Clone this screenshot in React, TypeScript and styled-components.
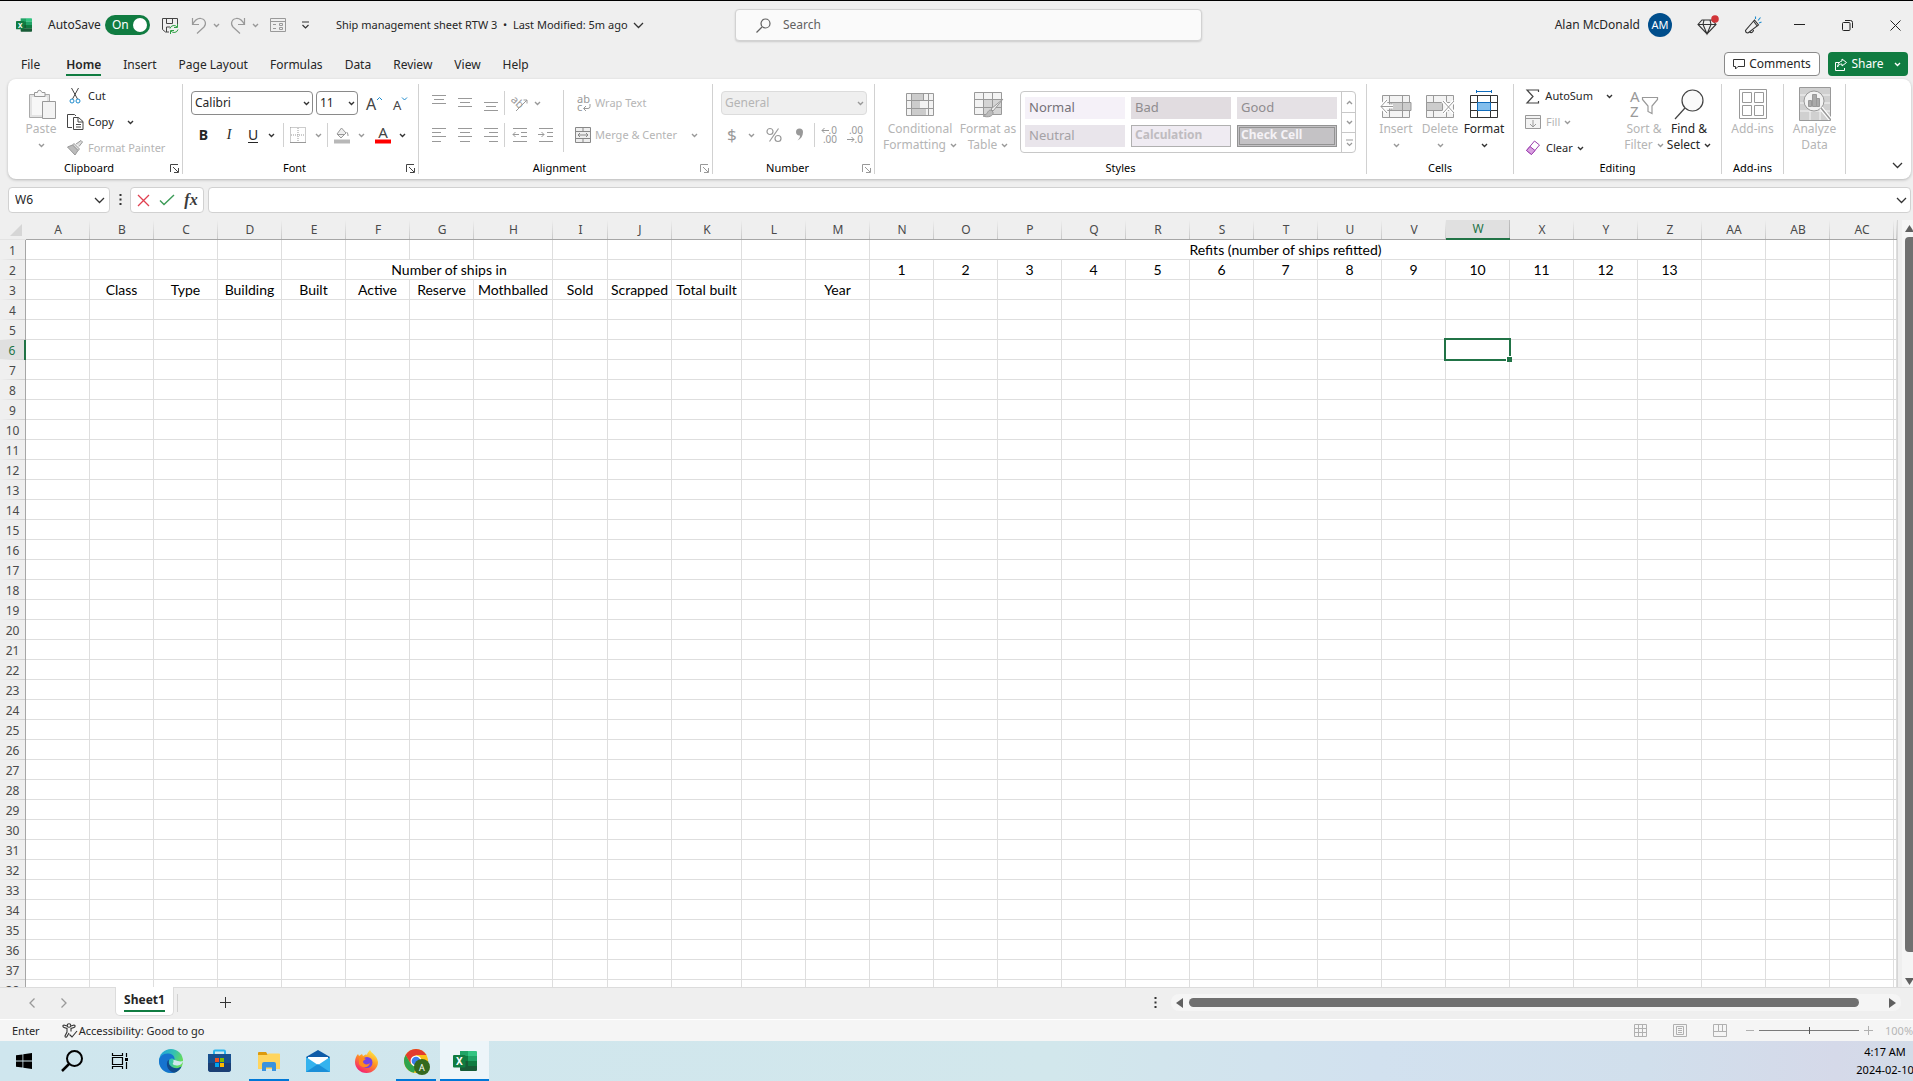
import React from "react";
import styled, { createGlobalStyle, css } from "styled-components";

const ui = `"Noto Sans", "Open Sans", sans-serif`;
const cellFont = `Lato, "Noto Sans", sans-serif`;
const GREEN = "#107c41";
const OFF = "#b5b5b5";
const INK = "#262626";

const Global = createGlobalStyle`
  *, *::before, *::after { box-sizing: border-box; }
  html, body { margin: 0; height: 100%; overflow: hidden; }
  body { background: #efefef; color: ${INK}; font: 12px/16px ${ui}; }
  button, input, select { font: inherit; color: inherit; margin: 0; padding: 0; border: 0; background: none; outline: none; }
  button { display: inline-flex; align-items: center; justify-content: center; white-space: nowrap; }
  button:disabled, select:disabled { color: ${OFF}; opacity: 1; }
  svg { display: block; flex: none; overflow: visible; }
`;

const Window = styled.div`
  display: flex;
  flex-direction: column;
  height: 100vh;
  border-top: 1px solid #000;
`;

/* ---------- title bar ---------- */
const TitleBar = styled.header`
  display: grid;
  grid-template-columns: 1fr 467px minmax(0, 686px);
  column-gap: 24px;
  height: 42px;
  padding: 6px 1px 0 16px;
`;
const Bar = styled.div<{ $end?: boolean }>`
  display: flex;
  align-items: center;
  min-width: 0;
  ${(p) => p.$end && "justify-content: flex-end;"}
`;
const AutoSave = styled.label`
  display: flex;
  align-items: center;
  gap: 4px;
  margin: 0 5px 0 16px;
`;
const Toggle = styled.span`
  display: flex;
  align-items: center;
  justify-content: space-between;
  width: 45px;
  height: 20px;
  padding: 0 3px 0 7px;
  border-radius: 10px;
  background: ${GREEN};
  color: #fff;
  &::after { content: ""; width: 14px; height: 14px; border-radius: 50%; background: #fff; }
`;
const HiddenCheck = styled.input`
  position: absolute;
  opacity: 0;
`;
const Tool = styled.button<{ $w?: number; $gap?: number }>`
  width: ${(p) => p.$w ?? 26}px;
  height: 24px;
  gap: ${(p) => p.$gap ?? 4}px;
  flex: none;
`;
const DocTitle = styled.button`
  gap: 5px;
  margin-left: 16px;
  font-size: 11px;
`;
const Search = styled.label`
  display: flex;
  align-items: center;
  gap: 12px;
  height: 32px;
  margin-top: 2px;
  padding-left: 20px;
  border: 1px solid #d2d2d2;
  border-radius: 4px;
  background: #fafafa;
  box-shadow: 0 1px 2px rgba(0, 0, 0, 0.15);
  color: #616161;
  input { flex: 1; min-width: 0; }
  input::placeholder { color: #616161; opacity: 1; }
`;
const Avatar = styled.span`
  display: grid;
  place-items: center;
  width: 24px;
  height: 24px;
  margin: 0 20px 0 8px;
  border-radius: 50%;
  background: #004e8c;
  color: #fff;
  font-size: 11px;
`;

/* ---------- ribbon tabs ---------- */
const TabRow = styled.nav`
  display: flex;
  align-items: center;
  height: 36px;
  padding: 6px 5px 0 10px;
`;
const RibbonTab = styled.button<{ $on?: boolean }>`
  height: 24px;
  margin: 0 11px;
  padding-top: 2px;
  &:first-child { margin-right: 15px; }
  ${(p) =>
    p.$on &&
    css`
      font-weight: 600;
      box-shadow: inset 0 -2px ${GREEN};
    `}
`;
const Spacer = styled.div`
  flex: 1;
`;
const Comments = styled.button`
  width: 96px;
  height: 24px;
  gap: 4px;
  margin-right: 8px;
  border: 1px solid #8a8a8a;
  border-radius: 4px;
  background: #fff;
`;
const Share = styled.button`
  width: 80px;
  height: 24px;
  gap: 4px;
  border-radius: 4px;
  background: ${GREEN};
  color: #fff;
  svg:last-child { margin-left: 6px; }
`;

/* ---------- ribbon ---------- */
const Ribbon = styled.section`
  display: flex;
  height: 100px;
  margin: 0 2px 0 8px;
  padding: 5px 0;
  border-radius: 8px;
  background: #fff;
  box-shadow: 0 1px 3px rgba(0, 0, 0, 0.24);
  flex: none;
`;
const Group = styled.div<{ $w: number }>`
  display: flex;
  flex-direction: column;
  width: ${(p) => p.$w}px;
  flex: none;
  border-right: 1px solid #d1d1d1;
`;
const GroupBody = styled.div<{ $pad?: number }>`
  display: flex;
  flex: 1;
  min-height: 0;
  padding-left: ${(p) => p.$pad ?? 8}px;
`;
const GroupFoot = styled.div<{ $launch?: boolean }>`
  display: grid;
  grid-template-columns: ${(p) => (p.$launch ? "1fr 12px" : "1fr")};
  align-items: center;
  justify-items: center;
  height: 12px;
  font-size: 11px;
  line-height: 12px;
  white-space: nowrap;
  color: #000;
  button { justify-self: start; }
`;
const Stack = styled.div<{ $gap?: number; $w?: number; $top?: number }>`
  display: flex;
  flex-direction: column;
  gap: ${(p) => p.$gap ?? 8}px;
  padding-top: ${(p) => p.$top ?? 7}px;
  ${(p) => p.$w && `width: ${p.$w}px;`}
  flex: none;
`;
const Row = styled.div`
  display: flex;
  align-items: center;
  height: 24px;
`;
const Big = styled.button<{ $w: number }>`
  flex-direction: column;
  justify-content: flex-start;
  width: ${(p) => p.$w}px;
  height: 72px;
  padding-top: 3px;
  flex: none;
`;
const BigIcon = styled.span`
  display: grid;
  place-items: center;
  height: 34px;
`;
const Line = styled.span`
  display: flex;
  align-items: center;
  gap: 4px;
  height: 16px;
`;
const Small = styled.button`
  justify-content: flex-start;
  gap: 4px;
  height: 24px;
  font-size: 11px;
`;
const IconSlot = styled.span<{ $w?: number }>`
  display: grid;
  place-items: center;
  width: ${(p) => p.$w ?? 16}px;
`;
const Rule = styled.span<{ $h?: number; $m?: number }>`
  width: 1px;
  height: ${(p) => p.$h ?? 24}px;
  margin: 0 ${(p) => p.$m ?? 4}px;
  background: #d1d1d1;
  flex: none;
`;
const Glyph = styled.span<{ $kind?: "b" | "i" | "u" }>`
  font-size: 14px;
  line-height: 16px;
  ${(p) => p.$kind === "b" && "font-weight: 700;"}
  ${(p) => p.$kind === "i" && `font-style: italic; font-family: "Liberation Serif", serif;`}
  ${(p) => p.$kind === "u" && "border-bottom: 1px solid currentColor; line-height: 14px;"}
`;
const Combo = styled.span<{ $w: number; $off?: boolean }>`
  position: relative;
  width: ${(p) => p.$w}px;
  height: 24px;
  margin-right: 3px;
  border: 1px solid ${(p) => (p.$off ? "#dcdcdc" : "#8a8a8a")};
  border-radius: 4px;
  background: ${(p) => (p.$off ? "#efefef" : "#fff")};
  flex: none;
  select { appearance: none; width: 100%; height: 100%; padding-left: 3px; }
  svg { position: absolute; right: 2px; top: 9px; pointer-events: none; }
`;
const Gallery = styled.div`
  display: grid;
  grid-template-columns: 1fr 15px;
  width: 336px;
  height: 62px;
  margin: 7px 0 0 2px;
  border: 1px solid #c8c8c8;
  border-radius: 4px;
  flex: none;
`;
const Swatches = styled.div`
  display: grid;
  grid-template-columns: repeat(3, 100px);
  grid-auto-rows: 22px;
  gap: 6px;
  padding: 5px 4px;
`;
const Swatch = styled.button<{ $bg: string; $fg: string; $kind?: "calc" | "check" }>`
  justify-content: flex-start;
  padding: 0 0 2px 4px;
  background: ${(p) => p.$bg};
  font-size: 13px;
  &&:disabled { color: ${(p) => p.$fg}; }
  ${(p) => p.$kind === "calc" && "border: 1px solid #b0b0b0; padding-left: 3px; font-weight: 700; font-size: 12px;"}
  ${(p) => p.$kind === "check" && "border: 3px double #939393; padding-left: 1px; font-weight: 700; font-size: 12px;"}
`;
const GalleryNav = styled.div`
  display: grid;
  grid-template-rows: repeat(3, 1fr);
  border-left: 1px solid #c8c8c8;
  button + button { border-top: 1px solid #c8c8c8; }
`;
const RibbonEnd = styled.div`
  display: flex;
  flex: 1;
  align-items: flex-end;
  justify-content: flex-end;
  padding: 0 8px 5px 0;
`;

/* ---------- formula bar ---------- */
const FormulaRow = styled.div`
  display: flex;
  align-items: center;
  gap: 4px;
  height: 26px;
  margin: 8px 2px 7px 8px;
  flex: none;
`;
const Box = styled.div<{ $w?: number }>`
  display: flex;
  align-items: center;
  height: 26px;
  border: 1px solid #d1d1d1;
  border-radius: 4px;
  background: #fff;
  ${(p) => (p.$w ? `width: ${p.$w}px; flex: none; padding: 0 4px 0 6px;` : "flex: 1; padding: 0 3px 0 6px;")}
  input { flex: 1; min-width: 0; }
`;
const Dots = styled.span`
  display: grid;
  place-items: center;
  width: 12px;
`;
const Fx = styled.span`
  font: italic 700 16px/20px "Liberation Serif", serif;
  color: #3b3b3b;
`;

/* ---------- sheet ---------- */
const SheetArea = styled.main`
  display: flex;
  flex: 1;
  min-height: 0;
  border-bottom: 1px solid #dcdcdc;
`;
const GridWrap = styled.div`
  flex: 1;
  min-width: 0;
  overflow: hidden;
  border-right: 1px solid #d6d6d6;
  background: #fff;
`;
const Table = styled.table`
  width: 100%;
  table-layout: fixed;
  border-collapse: separate;
  border-spacing: 0;
`;
const ColHead = styled.th<{ $on?: boolean }>`
  height: 20px;
  padding: 0;
  border-bottom: 1px solid #a6a6a6;
  background: linear-gradient(#efefef, #c8c8c8) right / 1px 100% no-repeat #efefef;
  color: #4a4a4a;
  font-weight: 400;
  line-height: 18px;
  ${(p) =>
    p.$on &&
    css`
      border-bottom: 2px solid #217346;
      background: linear-gradient(#c0c0c0, #b0b0b0) right / 1px 100% no-repeat #e0e0e0;
      color: #217346;
    `}
`;
const Corner = styled.th`
  height: 20px;
  padding: 0;
  border-bottom: 1px solid #e3e3e3;
  background: #efefef;
  svg { margin-left: 10px; }
`;
const RowHead = styled.th<{ $on?: boolean }>`
  height: 20px;
  padding: 2px 0 0;
  border-right: 1px solid #a6a6a6;
  background: linear-gradient(90deg, #efefef, #cfcfcf) bottom / 100% 1px no-repeat #efefef;
  color: #4a4a4a;
  font-weight: 400;
  line-height: 18px;
  ${(p) =>
    p.$on &&
    css`
      border-right: 2px solid #217346;
      background-color: #e0e0e0;
      color: #217346;
    `}
`;
const Cell = styled.td<{ $on?: boolean }>`
  height: 20px;
  padding: 0;
  border: solid #dedede;
  border-width: 0 1px 1px 0;
  color: #000;
  font: 14px/18px ${cellFont};
  text-align: center;
  white-space: nowrap;
  ${(p) =>
    p.$on &&
    css`
      position: relative;
      &::before { content: ""; position: absolute; inset: -2px; border: 2px solid #217346; z-index: 1; }
      &::after { content: ""; position: absolute; right: -3px; bottom: -3px; width: 6px; height: 6px; border: solid #fff; border-width: 1px 0 0 1px; background: #217346; z-index: 2; }
    `}
`;
const VScroll = styled.div`
  display: flex;
  flex-direction: column;
  align-items: flex-end;
  gap: 5px;
  width: 15px;
  padding: 5px 0 2px;
  overflow: hidden;
  background: linear-gradient(90deg, #efefef 4px, #f5f5f5 4px);
`;
const VThumb = styled.div`
  flex: 1;
  width: 8px;
  margin-bottom: 21px;
  border-radius: 4px 0 0 4px;
  background: #707070;
`;

/* ---------- bottom ---------- */
const TabsBar = styled.div`
  display: flex;
  align-items: center;
  height: 31px;
  padding-bottom: 2px;
  flex: none;
`;
const Nav = styled.div`
  display: flex;
  width: 115px;
  padding-left: 16px;
`;
const SheetTab = styled.button`
  align-self: flex-start;
  width: 59px;
  height: 29px;
  margin-top: -1px;
  border: 1px solid #dcdcdc;
  border-top: 0;
  border-radius: 0 0 5px 5px;
  background: #fff;
  font-weight: 700;
  z-index: 1;
  span { border-bottom: 2px solid ${GREEN}; line-height: 20px; }
`;
const HScroll = styled.div`
  display: flex;
  align-items: center;
  gap: 6px;
  flex: 0 0 730px;
  height: 17px;
  margin: 0 12px 0 10px;
  padding: 0 5px;
  border-radius: 8px;
  background: #f5f5f5;
`;
const HThumb = styled.div`
  flex: 1;
  height: 9px;
  margin-right: 24px;
  border-radius: 5px;
  background: #707070;
`;
const Status = styled.footer`
  display: flex;
  align-items: center;
  height: 22px;
  padding-left: 12px;
  border-top: 1px solid #fff;
  background: #f5f5f5;
  font-size: 11px;
  overflow: hidden;
  flex: none;
`;
const Access = styled.button`
  gap: 1px;
  margin-left: 22px;
`;
const Zoom = styled.input`
  appearance: none;
  width: 100px;
  height: 12px;
  background: linear-gradient(#7a7a7a, #7a7a7a) center / 100% 1px no-repeat;
  &::-webkit-slider-thumb { appearance: none; width: 1px; height: 7px; background: #555; }
`;
const Percent = styled.span`
  width: 36px;
  padding-left: 8px;
  color: ${OFF};
`;
const Taskbar = styled.div`
  display: flex;
  height: 40px;
  background: linear-gradient(90deg, #cfe6ee 0%, #d2e7ec 55%, #d2e1ef 72%, #d1dfec 86%, #d5d9e9 96%, #d3dce8 100%);
  flex: none;
`;
const SystemButtons = styled.div`
  display: flex;
  margin-right: 2px;
`;
const TaskButton = styled.button<{ $system?: boolean; $run?: boolean; $on?: boolean }>`
  width: ${(p) => (p.$system ? 48 : 49)}px;
  height: 40px;
  ${(p) => p.$run && "background: linear-gradient(#0078d7, #0078d7) bottom / 40px 2px no-repeat;"}
  ${(p) => p.$on && "background: linear-gradient(#0078d7, #0078d7) bottom / 100% 2px no-repeat #edf5f9;"}
`;
const Clock = styled.div`
  display: flex;
  flex-direction: column;
  width: 56px;
  align-items: center;
  padding-top: 2px;
  color: #000;
  font-size: 11px;
  line-height: 18px;
  white-space: nowrap;
`;

/* ---------- icons ---------- */
type SvgP = { w: number; h: number; c?: string; s?: number; children: React.ReactNode };
const I = ({ w, h, c = "#444", s = 1, children }: SvgP) => (
  <svg width={w} height={h} viewBox={`0 0 ${w} ${h}`} fill="none" stroke={c} strokeWidth={s} aria-hidden="true">
    {children}
  </svg>
);
const G = "#999";
const Chev = ({ c = "#333", up = false }: { c?: string; up?: boolean }) => (
  <I w={7} h={5} c={c} s={1.4}>
    <path d={up ? "M1 4l2.5-2.5L6 4" : "M1 1l2.5 2.5L6 1"} />
  </I>
);
const WideChev = () => (
  <I w={11} h={7} c="#333" s={1.3}>
    <path d="M1 1l4.500 4.500L10 1" />
  </I>
);
const Launch = ({ c = "#444" }: { c?: string }) => (
  <I w={9} h={9} c={c}>
    <path d="M.5 8V.5h7.5M3 3l5 5M8.500 4v4.500H4" />
  </I>
);
const Lines = ({ rows, y }: { rows: [number, number][]; y: number[] }) => (
  <I w={16} h={16} c={G}>
    {rows.map(([a, b], i) => (
      <path key={i} d={`M${a} ${y[i]}H${b}`} />
    ))}
  </I>
);
const ExcelLogo = ({ w, h }: { w: number; h: number }) => (
  <svg width={w} height={h} viewBox="0 0 24 22" aria-hidden="true">
    <path d="M7 1h8v10H7z" fill="#21a366" />
    <path d="M15 1h8a1 1 0 0 1 1 1v4h-9z" fill="#33c481" />
    <path d="M15 6h9v5h-9z" fill="#21a366" />
    <path d="M7 6h8v5H7z" fill="#107c41" />
    <path d="M7 11h8v5H7z" fill="#185c37" />
    <path d="M15 11h9v5h-9z" fill="#107c41" />
    <path d="M7 16h17v4a1 1 0 0 1-1 1H8a1 1 0 0 1-1-1z" fill="#185c37" />
    <rect x="0" y="5" width="12.500" height="12.500" rx="1" fill="#107c41" />
    <text x="6.300" y="15" fontFamily="Noto Sans" fontWeight="700" fontSize="10" fill="#fff" textAnchor="middle">X</text>
  </svg>
);
const DecimalIcon = ({ a, b, right }: { a: string; b: string; right?: boolean }) => (
  <I w={16} h={18} c={G}>
    <g fill={G} stroke="none" fontFamily="Noto Sans" fontSize="10">
      <text x="16" y="8" textAnchor="end">{a}</text>
      <text x="16" y="17" textAnchor="end">{b}</text>
    </g>
    {right ? <path d="M0 13.5h7M4.500 11L7 13.500 4.500 16" /> : <path d="M8 4.500H1M3.500 2L1 4.500 3.500 7" />}
  </I>
);
const SheetIcon = ({ children, c = G, fill = "#f3f3f3" }: { children?: React.ReactNode; c?: string; fill?: string }) => (
  <I w={32} h={30} c={c}>
    <path d="M2.500 6.500h27v22h-27z" fill={fill} />
    <path d="M2.500 13.500h27M2.500 21.500h27M9.500 6.500v22M22.500 6.500v22" />
    {children}
  </I>
);

/* ---------- data ---------- */
const letters = "A B C D E F G H I J K L M N O P Q R S T U V W X Y Z AA AB AC".split(" ");
const widths: Record<string, number> = { H: 79, I: 55, K: 70 };
const span: Record<string, number> = { N1: 13, F2: 3 };
const values: Record<string, string> = {
  N1: "Refits (number of ships refitted)",
  F2: "Number of ships in",
  B3: "Class", C3: "Type", D3: "Building", E3: "Built", F3: "Active", G3: "Reserve",
  H3: "Mothballed", I3: "Sold", J3: "Scrapped", K3: "Total built", M3: "Year",
};
for (let i = 1; i <= 13; i++) values[letters[12 + i] + "2"] = String(i);

function GridRow({ n }: { n: number }) {
  const cells: React.ReactNode[] = [];
  for (let c = 0; c < letters.length; ) {
    const id = letters[c] + n;
    const s = span[id] ?? 1;
    cells.push(
      <Cell key={id} colSpan={s} $on={id === "W6"}>
        {values[id]}
      </Cell>
    );
    c += s;
  }
  return (
    <tr>
      <RowHead scope="row" $on={n === 6}>{n}</RowHead>
      {cells}
      <Cell />
    </tr>
  );
}

const Foot = ({ label, launch }: { label: string; launch?: string }) => (
  <GroupFoot $launch={!!launch}>
    <span>{label}</span>
    {launch && (
      <button aria-label={`${label} settings`}>
        <Launch c={launch} />
      </button>
    )}
  </GroupFoot>
);

const tabs = ["File", "Home", "Insert", "Page Layout", "Formulas", "Data", "Review", "View", "Help"];

export default function App() {
  return (
    <Window>
      <Global />
      <TitleBar>
        <Bar>
          <ExcelLogo w={16} h={16} />
          <AutoSave>
            AutoSave
            <HiddenCheck type="checkbox" defaultChecked />
            <Toggle>On</Toggle>
          </AutoSave>
          <Tool $w={31} aria-label="Save">
            <I w={17} h={17}>
              <path d="M7 15H3.500L.500 12.500V1.500h15V7M4.500 1.500v5h6v-5M4.500 15v-5H8" />
              <path d="M8 11.500a4 4 0 0 1 7-1.500M15.500 7v3.500H12M16 12.500a4 4 0 0 1-7 1.500M8.500 17v-3.500H12" stroke="#2ea043" />
            </I>
          </Tool>
          <Tool $w={39} $gap={6} aria-label="Undo">
            <I w={16} h={17} c={G} s={1.2}>
              <path d="M1.500 1v6.500H8M1.500 7.500C4 3 7 1 10 1.500c4 .500 6 5 3 8.500l-7 6.500" />
            </I>
            <Chev c={G} />
          </Tool>
          <Tool $w={39} $gap={6} aria-label="Redo">
            <I w={16} h={17} c={G} s={1.2}>
              <path d="M14.500 1v6.500H8M14.500 7.500C12 3 9 1 6 1.500c-4 .500-6 5-3 8.500l7 6.500" />
            </I>
            <Chev c={G} />
          </Tool>
          <Tool $w={28} aria-label="Form">
            <I w={16} h={15} c={G}>
              <path d="M.500 .500h15v13H.500zM.500 3.500h15M3 6.500h3M3 10.500h3M9.500 5.500h3v2h-3zM9.500 9.500h3v2h-3z" />
            </I>
          </Tool>
          <Tool $w={28} aria-label="Customize toolbar">
            <I w={9} h={8} c="#333" s={1.2}>
              <path d="M1 1h7M1.500 4l3 3 3-3" />
            </I>
          </Tool>
          <DocTitle>
            Ship management sheet RTW 3&nbsp; • &nbsp;Last Modified: 5m ago
            <WideChev />
          </DocTitle>
        </Bar>
        <Search>
          <I w={15} h={15} c="#616161" s={1.2}>
            <circle cx="9.500" cy="5.500" r="4.500" />
            <path d="M6 9l-5.500 5.500" />
          </I>
          <input placeholder="Search" aria-label="Search" />
        </Search>
        <Bar $end>
          <span>Alan McDonald</span>
          <Avatar>AM</Avatar>
          <Tool $w={32} aria-label="Premium">
            <I w={22} h={20} c="#333" s={1.1}>
              <path d="M5 5h10l4 4.500L10 19 1 9.500zM1 9.500h18M7 5L6 9.500 10 19l4-9.500L13 5" />
              <circle cx="18" cy="4" r="3.800" fill="#d13438" stroke="none" />
            </I>
          </Tool>
          <Tool $w={58} aria-label="What's new">
            <I w={18} h={18} c="#333" s={1.1}>
              <path d="M10.500 4L1.500 14.500c0 1.500 1 2.500 2.500 2.500L14.500 9zM5.500 16c2 1.500 4.500 0 4-3.500M9.500 5l4 5.500" />
              <path d="M11.500 3V.500M14 4.500l2.500-3M15 7l2.500-1" stroke="#1e8bcd" />
            </I>
          </Tool>
          <Tool $w={34} aria-label="Minimize">
            <I w={11} h={2} c="#222"><path d="M0 .5h11" /></I>
          </Tool>
          <Tool $w={62} aria-label="Restore">
            <I w={11} h={11} c="#222">
              <rect x=".500" y="2.500" width="7.500" height="8" rx="1" />
              <path d="M3 .500h5.500a2 2 0 0 1 2 2V8" />
            </I>
          </Tool>
          <Tool $w={34} aria-label="Close">
            <I w={11} h={11} c="#222"><path d="M.500 .500l10 10M10.500 .500l-10 10" /></I>
          </Tool>
        </Bar>
      </TitleBar>

      <TabRow>
        {tabs.map((t) => (
          <RibbonTab key={t} $on={t === "Home"}>{t}</RibbonTab>
        ))}
        <Spacer />
        <Comments>
          <I w={12} h={12} c="#333"><path d="M.500 1.500h11v7H5l-2.500 2.500V8.500h-2z" /></I>
          Comments
        </Comments>
        <Share>
          <I w={12} h={13} c="#fff">
            <path d="M4 4.500H.500v8h9V10M7 1l4.500 3.500L7 8V6C4.500 6 3.500 7 2.500 9 3 5.500 4.500 3.500 7 3z" />
          </I>
          Share
          <Chev c="#fff" />
        </Share>
      </TabRow>

      <Ribbon>
        <Group $w={175}>
          <GroupBody>
            <Big $w={50} disabled>
              <BigIcon>
                <I w={24} h={31} c={G}>
                  <path d="M.5 5.500h20v23H.5z" fill="#e3e3e3" stroke="#aaa" />
                  <path d="M3 8h15v18H3z" fill="#f7f7f7" stroke="none" />
                  <path d="M5.500 7.500v-4h3a2 2 0 0 1 4-.500l.500.500h3v4z" fill="#f7f7f7" />
                  <path d="M13.500 12.500h13v17h-13z" fill="#f3f3f3" />
                </I>
              </BigIcon>
              <Line>Paste</Line>
              <Line><Chev c={G} /></Line>
            </Big>
            <Stack $gap={2} $top={0}>
              <Small>
                <IconSlot $w={18}>
                  <I w={12} h={16}>
                    <path d="M2.500 0l6 11M9.500 0l-6 11" />
                    <circle cx="3" cy="13" r="2" stroke="#1e8bcd" />
                    <circle cx="9" cy="13" r="2" stroke="#1e8bcd" />
                  </I>
                </IconSlot>
                Cut
              </Small>
              <Small>
                <IconSlot $w={18}>
                  <I w={17} h={16}>
                    <path d="M5 13.500H.500V.500h7L9 2M6.500 3.500h5l4.500 4v8H6.500zM11 3.500V8h5M9 10.500h5M9 13h5" />
                  </I>
                </IconSlot>
                Copy
                <IconSlot $w={26}><Chev /></IconSlot>
              </Small>
              <Small disabled>
                <IconSlot $w={18}>
                  <I w={16} h={16} c={G}>
                    <path d="M9 4l5-3.500 1.500 1.500L12 6.500M7 3.500L12.500 9 11 10.500 5.500 5z" fill="#ddd" />
                    <path d="M5.500 5L.500 7l7.500 8 3-4.500z" fill="#bbb" />
                  </I>
                </IconSlot>
                Format Painter
              </Small>
            </Stack>
          </GroupBody>
          <Foot label="Clipboard" launch="#444" />
        </Group>

        <Group $w={236}>
          <GroupBody>
            <Stack>
              <Row>
                <Combo $w={122}>
                  <select aria-label="Font"><option>Calibri</option></select>
                  <Chev />
                </Combo>
                <Combo $w={42}>
                  <select aria-label="Font size"><option>11</option></select>
                  <Chev />
                </Combo>
                <Tool aria-label="Increase font size">
                  <I w={16} h={17}>
                    <text x="0" y="15" fontFamily="Noto Sans" fontSize="16" fill="#444" stroke="none">A</text>
                    <path d="M11 5l2.500-2.500L16 5" stroke="#1e8bcd" />
                  </I>
                </Tool>
                <Tool aria-label="Decrease font size">
                  <I w={15} h={17}>
                    <text x="0" y="15" fontFamily="Noto Sans" fontSize="13" fill="#444" stroke="none">A</text>
                    <path d="M9 2.500L11.500 5 14 2.500" stroke="#1e8bcd" />
                  </I>
                </Tool>
              </Row>
              <Row>
                <Tool $w={25}><Glyph $kind="b">B</Glyph></Tool>
                <Tool $w={26}><Glyph $kind="i">I</Glyph></Tool>
                <Tool $w={39} $gap={10}><Glyph $kind="u">U</Glyph><Chev /></Tool>
                <Rule $m={2} />
                <Tool $w={39} $gap={9} aria-label="Borders">
                  <I w={16} h={16} c={G}>
                    <path d="M.500 .500h15v15M.500 .500v15M8 1v14M1 8h14" strokeDasharray="1 1" />
                    <path d="M0 15.500h16" />
                  </I>
                  <Chev c={G} />
                </Tool>
                <Rule $m={2} />
                <Tool $w={39} $gap={8} aria-label="Fill color">
                  <I w={16} h={17} c={G}>
                    <path d="M7.500 1L12 6l-5 5-4-4zM4 7.500h7M12.500 5c1.500 1 1.500 3 1.500 4" fill="#eee" />
                    <path d="M0 14.500h16" strokeWidth="4" stroke="#b8b8b8" />
                  </I>
                  <Chev c={G} />
                </Tool>
                <Tool $w={43} $gap={8} aria-label="Font color">
                  <I w={16} h={17}>
                    <text x="8" y="11" fontFamily="Noto Sans" fontSize="15" fill="#444" stroke="none" textAnchor="middle">A</text>
                    <path d="M0 14.500h16" strokeWidth="4" stroke="#f00" />
                  </I>
                  <Chev />
                </Tool>
              </Row>
            </Stack>
          </GroupBody>
          <Foot label="Font" launch="#444" />
        </Group>

        <Group $w={294}>
          <GroupBody $pad={7}>
            <Stack>
              <Row>
                <Tool aria-label="Top align"><Lines rows={[[1, 15], [3, 13], [1, 15]]} y={[0.5, 4.5, 8.5]} /></Tool>
                <Tool aria-label="Middle align"><Lines rows={[[1, 15], [3, 13], [1, 15]]} y={[3.5, 7.5, 11.5]} /></Tool>
                <Tool aria-label="Bottom align"><Lines rows={[[1, 15], [3, 13], [1, 15]]} y={[7.5, 11.5, 15.5]} /></Tool>
                <Rule $m={0} />
                <Tool $w={42} $gap={6} aria-label="Orientation">
                  <I w={17} h={17} c={G}>
                    <text x="-1" y="10" fontFamily="Noto Sans" fontSize="11" fill={G} stroke="none" transform="rotate(45 5 8)">ab</text>
                    <path d="M5 16L16 5M12.500 5H16v3.500" />
                  </I>
                  <Chev c={G} />
                </Tool>
              </Row>
              <Row>
                <Tool aria-label="Align left"><Lines rows={[[1, 15], [1, 10], [1, 15], [1, 10]]} y={[1.5, 5.5, 9.5, 14.5]} /></Tool>
                <Tool aria-label="Center"><Lines rows={[[1, 15], [3, 13], [1, 15], [3, 13]]} y={[1.5, 5.5, 9.5, 14.5]} /></Tool>
                <Tool aria-label="Align right"><Lines rows={[[1, 15], [6, 15], [1, 15], [6, 15]]} y={[1.5, 5.5, 9.5, 14.5]} /></Tool>
                <Rule $m={0} />
                <Tool $w={29} aria-label="Decrease indent">
                  <I w={16} h={16} c={G}><path d="M1 1.500h14M9 5.500h6M9 9.500h6M1 14.500h14M7 7.500H1M3.500 5L1 7.500 3.500 10" /></I>
                </Tool>
                <Tool $w={24} aria-label="Increase indent">
                  <I w={16} h={16} c={G}><path d="M1 1.500h14M9 5.500h6M9 9.500h6M1 14.500h14M0 7.500h6M3.500 5L6 7.500 3.500 10" /></I>
                </Tool>
              </Row>
            </Stack>
            <Stack $top={6} $w={17}><Rule $h={62} $m={5} /></Stack>
            <Stack>
              <Small disabled>
                <IconSlot>
                  <I w={15} h={17} c={G}>
                    <g fill={G} stroke="none" fontFamily="Noto Sans" fontSize="11">
                      <text x="1" y="8">ab</text>
                      <text x="1" y="16">c</text>
                    </g>
                    <path d="M14 9v2.500a2 2 0 0 1-2 2H8M10 11l-2.500 2.500L10 16" />
                  </I>
                </IconSlot>
                Wrap Text
              </Small>
              <Small disabled>
                <IconSlot>
                  <I w={16} h={16} c="#888">
                    <path d="M.500 .500h15v15H.500z" fill="#eee" />
                    <path d="M.500 4.500h15M.500 11.500h15M8 .500v4M8 11.500v4M3 8h10M5 6L3 8l2 2M11 6l2 2-2 2" />
                  </I>
                </IconSlot>
                Merge &amp; Center
                <IconSlot $w={26}><Chev c={G} /></IconSlot>
              </Small>
            </Stack>
          </GroupBody>
          <Foot label="Alignment" launch={G} />
        </Group>

        <Group $w={162}>
          <GroupBody>
            <Stack>
              <Row>
                <Combo $w={146} $off>
                  <select aria-label="Number format" disabled><option>General</option></select>
                  <Chev c={G} />
                </Combo>
              </Row>
              <Row>
                <Tool $w={40} $gap={11} disabled aria-label="Currency">
                  <I w={10} h={18} c={G}><text x="0" y="15" fontFamily="Noto Sans" fontSize="17" fill={G} stroke="none">$</text></I>
                  <Chev c={G} />
                </Tool>
                <Tool $w={25} disabled aria-label="Percent">
                  <I w={16} h={16} c={G} s={1.2}><circle cx="4" cy="4.500" r="3" /><circle cx="12" cy="11.500" r="3" /><path d="M12.500 1.500l-9 13" /></I>
                </Tool>
                <Tool $w={27} aria-label="Comma style">
                  <I w={9} h={14}><path d="M1 4a3.500 3.500 0 0 1 7 0c0 4-2 7-5.500 8.500 1.500-1.500 2.500-3 2.500-5C3 8 1 6.500 1 4z" fill={G} stroke="none" /></I>
                </Tool>
                <Rule $m={1} />
                <Tool $w={26} aria-label="Increase decimal"><DecimalIcon a=".0" b=".00" /></Tool>
                <Tool aria-label="Decrease decimal"><DecimalIcon a=".00" b=".0" right /></Tool>
              </Row>
            </Stack>
          </GroupBody>
          <Foot label="Number" launch={G} />
        </Group>

        <Group $w={492}>
          <GroupBody $pad={7}>
            <Big $w={76} disabled>
              <BigIcon>
                <I w={28} h={23} c={G}>
                  <path d="M.500 .500h27v22H.500z" fill="#f3f3f3" />
                  <path d="M5 1h13v6H5zM5 8h9v7H5zM5 16h15v6H5z" fill="#ccc" stroke="none" />
                  <path d="M.500 7.500h27M.500 15.500h27M5.500 .500v22M22.500 .500v22M17.500 .500v7" />
                </I>
              </BigIcon>
              <Line>Conditional</Line>
              <Line>Formatting <Chev c={G} /></Line>
            </Big>
            <Big $w={60} disabled>
              <BigIcon>
                <I w={32} h={28} c={G}>
                  <path d="M2.500 2.500h27v22h-27z" fill="#f3f3f3" />
                  <path d="M11 9h18v15H11z" fill="#d4d4d4" stroke="none" />
                  <path d="M2.500 9.500h27M2.500 17.500h27M11.500 2.500v22M20.500 2.500v22" />
                  <path d="M31 9L21 21l-2-2z" fill="#eee" />
                  <path d="M19 20c-4 0-3 5-8 6 5 2 11 0 10-4z" fill="#bbb" />
                </I>
              </BigIcon>
              <Line>Format as</Line>
              <Line>Table <Chev c={G} /></Line>
            </Big>
            <Gallery>
              <Swatches>
                <Swatch disabled $bg="#f5f1f8" $fg="#757278">Normal</Swatch>
                <Swatch disabled $bg="#e1dce0" $fg="#8f8c8f">Bad</Swatch>
                <Swatch disabled $bg="#e5e1e5" $fg="#8f8c8f">Good</Swatch>
                <Swatch disabled $bg="#e9e5eb" $fg="#a5a2a6">Neutral</Swatch>
                <Swatch disabled $bg="#efebf2" $fg="#bfbcc0" $kind="calc">Calculation</Swatch>
                <Swatch disabled $bg="#c4c2c5" $fg="#f5f2f6" $kind="check">Check Cell</Swatch>
              </Swatches>
              <GalleryNav>
                <button aria-label="Previous styles"><Chev c={G} up /></button>
                <button aria-label="Next styles"><Chev c={G} /></button>
                <button aria-label="More styles">
                  <I w={7} h={8} c={G} s={1.2}><path d="M0 1h7M1 4l2.500 2.500L6 4" /></I>
                </button>
              </GalleryNav>
            </Gallery>
          </GroupBody>
          <Foot label="Styles" />
        </Group>

        <Group $w={147}>
          <GroupBody $pad={7}>
            <Big $w={44} disabled>
              <BigIcon>
                <SheetIcon>
                  <path d="M11 13.500h20v8H11z" fill="#ccc" />
                  <path d="M22.500 13.500v8" />
                  <path d="M13 17.500H1M7 11l-6 6.500 6 6.500" stroke="#fff" strokeWidth="4" />
                  <path d="M13 17.500H1M7 11l-6 6.500 6 6.500" />
                </SheetIcon>
              </BigIcon>
              <Line>Insert</Line>
              <Line><Chev c={G} /></Line>
            </Big>
            <Big $w={44} disabled>
              <BigIcon>
                <SheetIcon>
                  <path d="M2.500 13.500h16v8h-16z" fill="#ccc" />
                  <path d="M19 12l11 12M30 12L19 24" stroke="#fff" strokeWidth="4" />
                  <path d="M19 12l11 12M30 12L19 24" />
                </SheetIcon>
              </BigIcon>
              <Line>Delete</Line>
              <Line><Chev c={G} /></Line>
            </Big>
            <Big $w={44}>
              <BigIcon>
                <SheetIcon c="#333" fill="#fff">
                  <path d="M9.500 13.500h13v8h-13z" fill="#83beec" stroke="#0f6cbd" />
                  <path d="M8.500 2.500h15M8.500 1v3M23.500 1v3" stroke="#0f6cbd" />
                </SheetIcon>
              </BigIcon>
              <Line>Format</Line>
              <Line><Chev /></Line>
            </Big>
          </GroupBody>
          <Foot label="Cells" />
        </Group>

        <Group $w={208}>
          <GroupBody $pad={10}>
            <Stack $gap={2} $top={0} $w={98}>
              <Small>
                <IconSlot $w={18}><I w={13} h={15} s={1.2}><path d="M12.500 3V1H1l6 6.500L1 14h11.500v-2" /></I></IconSlot>
                AutoSum
                <IconSlot $w={26}><Chev /></IconSlot>
              </Small>
              <Small disabled>
                <IconSlot $w={18}>
                  <I w={16} h={15} c={G}><path d="M.500 .500h15v13H.500z" fill="#f3f3f3" /><path d="M.500 3.500h15M8 5v7M5 9l3 3 3-3" /></I>
                </IconSlot>
                Fill <Chev c={G} />
              </Small>
              <Small>
                <IconSlot $w={18}>
                  <I w={16} h={16} c="#9b3fae"><path d="M9.500 1l5 4-8 9.500-5-4z" fill="#fff" /><path d="M5 6.500l5 4-3.500 4-5-4z" fill="#d9a0e0" /></I>
                </IconSlot>
                Clear <Chev />
              </Small>
            </Stack>
            <Big $w={44} disabled>
              <BigIcon>
                <I w={30} h={30} c={G} s={1.2}>
                  <g fill={G} stroke="none" fontFamily="Noto Sans" fontSize="15">
                    <text x="1" y="13">A</text>
                    <text x="1" y="28">Z</text>
                  </g>
                  <path d="M13.500 8.500h15v2L23 17v7.500l-4-2V17l-5.500-6.500z" />
                </I>
              </BigIcon>
              <Line>Sort &amp;</Line>
              <Line>Filter <Chev c={G} /></Line>
            </Big>
            <Big $w={46}>
              <BigIcon>
                <I w={30} h={31} s={1.2}><circle cx="18.500" cy="11.500" r="10.500" fill="#fafafa" /><path d="M11 19L1 30" /></I>
              </BigIcon>
              <Line>Find &amp;</Line>
              <Line>Select <Chev /></Line>
            </Big>
          </GroupBody>
          <Foot label="Editing" />
        </Group>

        <Group $w={62}>
          <GroupBody $pad={0}>
            <Big $w={61} disabled>
              <BigIcon>
                <I w={28} h={30} c={G}><path d="M.500 .500h27v29H.500zM3.500 3.500h9v10h-9zM15.500 3.500h9v10h-9zM3.500 16.500h9v10h-9zM15.500 16.500h9v10h-9z" /></I>
              </BigIcon>
              <Line>Add-ins</Line>
            </Big>
          </GroupBody>
          <Foot label="Add-ins" />
        </Group>

        <Group $w={62}>
          <GroupBody $pad={0}>
            <Big $w={61} disabled>
              <BigIcon>
                <I w={32} h={34} c={G}>
                  <path d="M.500 .500h31v33H.500z" fill="#d0d0d0" />
                  <path d="M1 8h30M1 16h30M1 24h30M11 24v9M21 24v9" stroke="#f5f5f5" />
                  <circle cx="15" cy="14" r="10" fill="#f3f3f3" />
                  <path d="M22 21l9 11" stroke="#fff" strokeWidth="4" />
                  <path d="M22 21l9 11" strokeWidth="1.500" />
                  <path d="M9.500 13.500h3v6h-3zM13.500 7.500h4v12h-4zM17.500 11.500h3v8h-3z" fill="#aaa" />
                </I>
              </BigIcon>
              <Line>Analyze</Line>
              <Line>Data</Line>
            </Big>
          </GroupBody>
        </Group>
        <RibbonEnd>
          <button aria-label="Collapse ribbon"><WideChev /></button>
        </RibbonEnd>
      </Ribbon>

      <FormulaRow>
        <Box $w={102}>
          <input defaultValue="W6" aria-label="Name box" />
          <WideChev />
        </Box>
        <Dots>
          <I w={3} h={12}><path d="M.500 1h2M.500 5.500h2M.500 10h2" strokeWidth="2" stroke="#333" /></I>
        </Dots>
        <Box $w={74}>
          <Tool $w={13} aria-label="Cancel"><I w={13} h={13} c="#e04050" s={1.3}><path d="M1 1l11 11M12 1L1 12" /></I></Tool>
          <Tool $w={34} aria-label="Enter"><I w={16} h={12} c="#3c9b57" s={1.4}><path d="M1 6.500l4 4L15 1" /></I></Tool>
          <Tool $w={14} aria-label="Insert function"><Fx>fx</Fx></Tool>
        </Box>
        <Box>
          <input aria-label="Formula" />
          <WideChev />
        </Box>
      </FormulaRow>

      <SheetArea>
        <GridWrap>
          <Table>
            <colgroup>
              <col style={{ width: 26 }} />
              {letters.map((l) => (
                <col key={l} style={{ width: widths[l] ?? 64 }} />
              ))}
              <col />
            </colgroup>
            <thead>
              <tr>
                <Corner><I w={12} h={12}><path d="M12 0v12H0z" fill="#d6d6d6" stroke="none" /></I></Corner>
                {letters.map((l) => (
                  <ColHead key={l} scope="col" $on={l === "W"}>{l}</ColHead>
                ))}
                <ColHead />
              </tr>
            </thead>
            <tbody>
              {Array.from({ length: 38 }, (_, i) => (
                <GridRow key={i} n={i + 1} />
              ))}
            </tbody>
          </Table>
        </GridWrap>
        <VScroll>
          <I w={8} h={7}><path d="M0 7l4.500-7L9 7z" fill="#606060" stroke="none" /></I>
          <VThumb />
          <I w={8} h={7}><path d="M0 0h9L4.500 7z" fill="#606060" stroke="none" /></I>
        </VScroll>
      </SheetArea>

      <TabsBar>
        <Nav>
          <Tool $w={32} aria-label="Previous sheet"><I w={6} h={10} c={G} s={1.3}><path d="M5.500 .500L1 5l4.500 4.500" /></I></Tool>
          <Tool $w={32} aria-label="Next sheet"><I w={6} h={10} c={G} s={1.3}><path d="M.500 .500L5 5 .500 9.500" /></I></Tool>
        </Nav>
        <SheetTab><span>Sheet1</span></SheetTab>
        <Rule $h={18} $m={3} />
        <Tool $w={88} aria-label="New sheet"><I w={11} h={11} c="#333"><path d="M5.500 0v11M0 5.500h11" /></I></Tool>
        <Spacer />
        <Dots><I w={3} h={12}><path d="M.500 1h2M.500 5.500h2M.500 10h2" strokeWidth="2" stroke="#333" /></I></Dots>
        <HScroll>
          <I w={7} h={10}><path d="M7 0v10L0 5z" fill="#606060" stroke="none" /></I>
          <HThumb />
          <I w={7} h={10}><path d="M0 0v10l7-5z" fill="#606060" stroke="none" /></I>
        </HScroll>
      </TabsBar>

      <Status>
        Enter
        <Access>
          <I w={16} h={15} c="#333" s={1.1}>
            <circle cx="7" cy="2.500" r="1.800" />
            <path d="M5 3L2 2C.500 2 .500 4 2 4.500l3 1V9l-2 4c0 1.500 1.500 1.500 2 .500L7 10M9 3l3-1c1.500 0 1.500 2 0 2.500l-3 1v3M7.500 11.500l2.500 2.500 5-6" />
          </I>
          Accessibility: Good to go
        </Access>
        <Spacer />
        <Tool $w={40} aria-label="Normal view"><I w={13} h={13} c="#b0b0b0"><path d="M.500 .500h12v12H.500zM.500 4.500h12M.500 8.500h12M4.500 .500v12M8.500 .500v12" /></I></Tool>
        <Tool $w={40} aria-label="Page layout view"><I w={14} h={13} c="#b0b0b0"><path d="M.500 .500h13v12H.500zM3.500 2.500h7v8h-7zM5 4.500h4M5 6.500h4M5 8.500h4" /></I></Tool>
        <Tool $w={40} aria-label="Page break preview"><I w={14} h={13} c="#b0b0b0"><path d="M.500 .500h13v12H.500zM5.500 .500v7h8M9.500 .500v7M.500 7.500h5" /></I></Tool>
        <Tool $w={19} aria-label="Zoom out"><I w={8} h={9} c="#b0b0b0"><path d="M0 4.500h8" /></I></Tool>
        <Zoom type="range" aria-label="Zoom" />
        <Tool $w={18} aria-label="Zoom in"><I w={9} h={9} c="#b0b0b0"><path d="M0 4.500h9M4.500 0v9" /></I></Tool>
        <Percent>100%</Percent>
      </Status>

      <Taskbar>
        <SystemButtons>
          <TaskButton $system aria-label="Start">
            <svg width="16" height="16" viewBox="0 0 16 16"><path d="M0 2.300L6.500 1.400v6.200H0zM7.300 1.300L16 0v7.600H7.300zM0 8.400h6.500v6.200L0 13.700zM7.300 8.400H16V16l-8.700-1.300z" fill="#000" /></svg>
          </TaskButton>
          <TaskButton $system aria-label="Search Windows">
            <I w={22} h={22} c="#000" s={2}><circle cx="13.500" cy="8.500" r="7.500" /><path d="M8 14l-7 7" strokeWidth="2.500" /></I>
          </TaskButton>
          <TaskButton $system aria-label="Task view">
            <I w={17} h={16} c="#000" s={1.2}><path d="M.500 0v2.500h10V0M.500 4.500h10v7H.500zM.500 16v-2.500h10V16M14.500 0v4M14.500 9v7" /><path d="M13 5h3v3h-3z" fill="#000" stroke="none" /></I>
          </TaskButton>
        </SystemButtons>
        <TaskButton aria-label="Edge">
          <svg width="24" height="24" viewBox="0 0 24 24">
            <defs>
              <linearGradient id="eg" x1="0" y1="0" x2="1" y2=".4"><stop offset="0" stopColor="#1b9de2" /><stop offset=".6" stopColor="#35c1b1" /><stop offset="1" stopColor="#66dd58" /></linearGradient>
            </defs>
            <circle cx="12" cy="12" r="12" fill="url(#eg)" />
            <path d="M0 12c0-5 5-8 9.500-7.500C14 5 16 8 15.500 11c-1-2-4-2-5.500 0-2 3 0 8 5 8.500 3 .300 5-.500 7.500-2C20 22 16 24 12 24 5 24 0 18.500 0 12z" fill="#1673cf" />
            <path d="M8.500 12c-2 5 1 10.500 6.500 11.700 3.500-.700 6-3 7.500-6.200-3 2-6 2.300-8.500 1-4-2-5-5-3.500-8z" fill="#114a8b" />
            <path d="M14 11.500c1 1 .500 2-.300 3 0 2.500 9.500 3.500 10.300-2.500-3 1-5 0-8.500-1z" fill="#d1e7ee" />
          </svg>
        </TaskButton>
        <TaskButton aria-label="Store">
          <svg width="23" height="24" viewBox="0 0 23 24">
            <path d="M6 6V2.500a1 1 0 0 1 1-1h9a1 1 0 0 1 1 1V6" fill="none" stroke="#2bb5ef" strokeWidth="2" />
            <path d="M0 5h23v15a3 3 0 0 1-3 3H3a3 3 0 0 1-3-3z" fill="#17508f" />
            <path d="M0 14h23v6a3 3 0 0 1-3 3H3a3 3 0 0 1-3-3z" fill="#1b3f74" />
            <path d="M7 9h4v4H7z" fill="#f25022" /><path d="M12 9h4v4h-4z" fill="#7fba00" />
            <path d="M7 14h4v4H7z" fill="#00a4ef" /><path d="M12 14h4v4h-4z" fill="#ffb900" />
          </svg>
        </TaskButton>
        <TaskButton $run aria-label="File Explorer">
          <svg width="22" height="19" viewBox="0 0 22 19">
            <path d="M0 1a1 1 0 0 1 1-1h7l2 3H0z" fill="#dd9a0c" />
            <path d="M0 3h9l1.500-1.500H21a1 1 0 0 1 1 1V17H0z" fill="#ffd55e" />
            <path d="M4 19v-7a2 2 0 0 1 2-2h10a2 2 0 0 1 2 2v7h-4v-3.500H8V19z" fill="#3a93dd" />
          </svg>
        </TaskButton>
        <TaskButton aria-label="Mail">
          <svg width="24" height="22" viewBox="0 0 24 22">
            <path d="M0 7l12-7 12 7v5H0z" fill="#0f5ca8" />
            <path d="M2 7h20v6l-10 4L2 13z" fill="#fff" />
            <path d="M0 7l12 8 12-8v15H0z" fill="#35b3ee" />
            <path d="M0 22l12-8 2 1.400L24 22z" fill="#1b8fd8" />
          </svg>
        </TaskButton>
        <TaskButton aria-label="Firefox">
          <svg width="23" height="23" viewBox="0 0 23 23">
            <defs><linearGradient id="ff" x1=".8" y1="0" x2=".2" y2="1"><stop offset="0" stopColor="#fff04a" /><stop offset=".45" stopColor="#ff9422" /><stop offset="1" stopColor="#f4127c" /></linearGradient></defs>
            <path d="M3 4l1 2 3-2 1 2c2-1 3-2 4-1 0-2 2-4 3-5 1 3 7 5 8 12 0 6-5 11-11.500 11S0 18 0 12c0-3 1-6 3-8z" fill="url(#ff)" />
            <circle cx="12" cy="12.500" r="5.500" fill="#7542e5" />
            <path d="M4 8c3-1 5 0 7 1-1 1-3 1-3 3 1 3 5 3 7 1-1 5-8 6-11 1z" fill="#ff8a1f" />
          </svg>
        </TaskButton>
        <TaskButton $run aria-label="Chrome">
          <svg width="24" height="24" viewBox="0 0 24 24">
            <circle cx="12" cy="12" r="12" fill="#fbc116" />
            <path d="M22.400 6H12L6.800 15 1.600 6A12 12 0 0 1 22.400 6z" fill="#e33b2e" />
            <path d="M1.600 6l5.200 9 5.200 3-2 5.800A12 12 0 0 1 1.600 6z" fill="#2da44e" />
            <circle cx="12" cy="12" r="5.500" fill="#fff" /><circle cx="12" cy="12" r="4.300" fill="#3b7ded" />
            <circle cx="18" cy="18" r="8" fill="#33691e" />
            <text x="18" y="21.500" fontFamily="Noto Sans" fontSize="9" fill="#fff" textAnchor="middle">A</text>
          </svg>
        </TaskButton>
        <TaskButton $on aria-label="Excel"><ExcelLogo w={24} h={22} /></TaskButton>
        <Spacer />
        <Clock>
          <span>4:17 AM</span>
          <span>2024-02-10</span>
        </Clock>
      </Taskbar>
    </Window>
  );
}
